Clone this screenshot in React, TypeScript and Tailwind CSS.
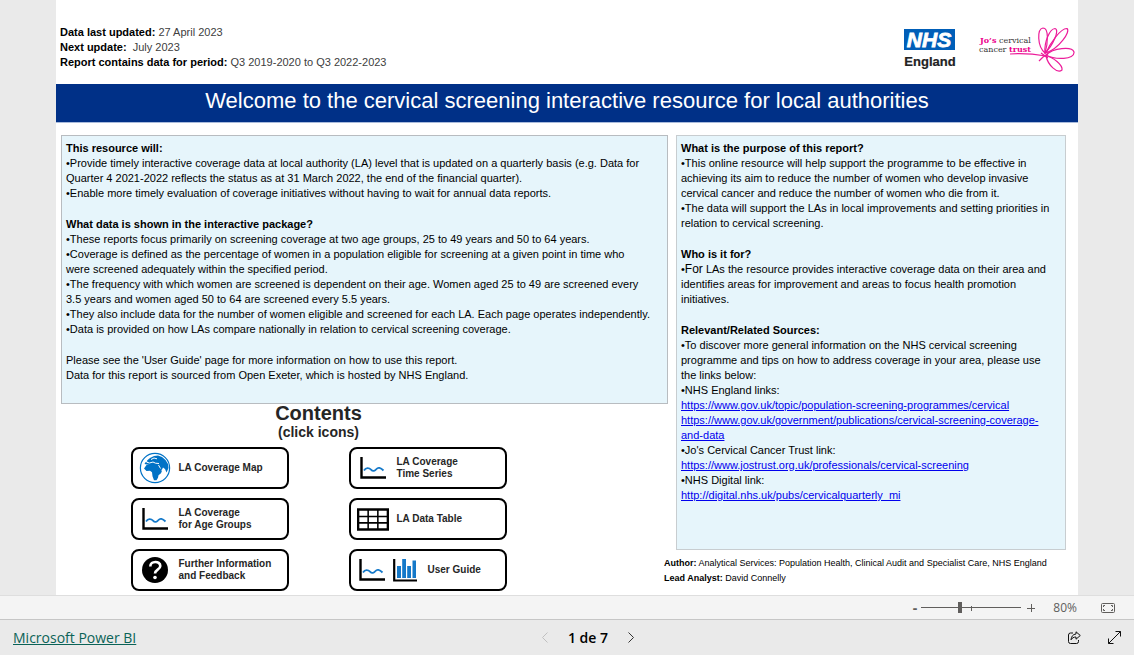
import { ReactNode, useState } from "react";

const ChartIcon = () => (
  <svg width="26" height="22" viewBox="0 0 26 22" fill="none">
    <path d="M1.5 0v20.5H26" stroke="#000" strokeWidth="2.4" />
    <path
      d="M4 13.5c2-3 5-3 7-.8s4 1.2 5.5-.7 4-1.5 7 1.5"
      stroke="#1579c9"
      strokeWidth="1.8"
    />
  </svg>
);

const BarsIcon = () => (
  <svg width="24" height="23" viewBox="0 0 24 23" fill="none">
    <path d="M1.2 0v21.5H24" stroke="#000" strokeWidth="2.2" />
    <path d="M4 7h4v12H4zM9.2 0H13v19H9.2zM14.2 7H18v12h-3.800zM19.500 1.500H23V19h-3.500z" fill="#1579c9" />
  </svg>
);

const TableIcon = () => (
  <svg width="33" height="23" viewBox="0 0 33 23" fill="none" stroke="#000">
    <path d="M1.2 1.2h30.6v20.6H1.2z" strokeWidth="2.4" />
    <path d="M1 8.5h31M1 15h31M11.5 1v21M21.5 1v21" strokeWidth="1.6" />
  </svg>
);

const QuestionIcon = () => (
  <svg width="26" height="26" viewBox="0 0 26 26" fill="none">
    <circle cx="13" cy="13" r="13" fill="#000" />
    <path
      d="M8.3 9.500c0-6 10-6 10-.5 0 3.800-5.300 3.500-5.300 7.500"
      stroke="#fff"
      strokeWidth="2.6"
    />
    <circle cx="13" cy="20.500" r="1.800" fill="#fff" />
  </svg>
);

const GlobeIcon = () => (
  <svg width="32" height="32" viewBox="0 0 32 32">
    <circle cx="16" cy="16" r="14.600" fill="#fff" stroke="#0072c6" strokeWidth="1.200" />
    <path
      d="M8 8.500l3-2.500 4-2 4-.5 4 1.500 3.500 3 2.500 4 .5 4-2 4.500-1.500-3.500-2-1.500-1 2-2 1.500-2.500-3.500-2-1.500-2.500-.5-3-1.500-3 .5-2.500-.5 1-1.800 2-.7z"
      fill="#0072c6"
    />
    <path
      d="M7.500 13l3-1.300 3 .3 2 1 3 .3 2 4 2.500 1.500-1 2.500-2.500 2-.5 2.500-1.500 2.500h-2.500l-1.500-4-.5-4-2-1.500-3.500.2-2.500-2.500z"
      fill="#0072c6"
    />
    <path d="M7.500 10.200l3 .8 3.500-1 2.500 1.200 3.500.3M12 7.500l3-1.500 3 .8M19.500 13l2 3.500" stroke="#fff" strokeWidth="1" fill="none" />
  </svg>
);

const JosTrustLogo = () => (
  <svg width="99" height="50" viewBox="0 0 99 50" role="img" aria-label="Jo's cervical cancer trust">
    <g fontFamily="'DejaVu Serif', serif" fontSize="8" fill="#333">
      <text x="4" y="19">
        <tspan fill="#ec008c" fontWeight="700">Jo’s</tspan> cervical
      </text>
      <text x="3" y="28">
        cancer <tspan fill="#ec008c" fontWeight="700">trust</tspan>
      </text>
    </g>
    <g fill="none" stroke="#ec1c9a" strokeWidth="1.200">
      <path d="M34 30c12-1 24 0 36 2" />
      <path d="M69 29C61 22 61 5 67 4c6 0 5 15 2 25z" />
      <path d="M69 29C68 17 74 5 79 4.500c5 1-2 17-10 24.500z" />
      <path d="M70 29C74 19 85 4 91 4.500c4 3-8 20-21 24.500z" />
      <path d="M70 31c7-7 26-9 28-3 1 8-19 8-28 3z" />
      <path d="M70 32c7 1 17 9 16 14-5 4-14-5-16-14z" />
      <path d="M63 37l4-4 5-3M65 29l7 5" />
    </g>
  </svg>
);

interface ContentsButtonProps {
  icon: ReactNode;
  iconWidth?: string;
  children: ReactNode;
}

const ContentsButton = ({ icon, iconWidth = "w-8", children }: ContentsButtonProps) => (
  <button className="flex items-center gap-2 h-[42px] w-[158px] pl-1.5 rounded-lg border-2 border-black bg-white text-left text-[10px] leading-3 font-bold text-neutral-800">
    <span className={`${iconWidth} flex-none flex items-center justify-center gap-2`}>{icon}</span>
    <span>{children}</span>
  </button>
);

const Link = ({ href, children }: { href: string; children: ReactNode }) => (
  <a href={href} className="text-[#0000ee] underline">
    {children}
  </a>
);

const App = () => {
  const [zoom, setZoom] = useState(39);

  return (
    <div className="min-h-screen flex flex-col bg-[#eaeaea] font-['Liberation_Sans',Arial,sans-serif] text-black">
      <main className="flex-1 mx-14 bg-white text-[11px] leading-[15px]">
        <header className="flex justify-between h-21 pl-1 pr-[3px]">
          <div className="pt-[25px] text-neutral-700">
            <p>
              <b className="text-black">Data last updated:</b> 27 April 2023
            </p>
            <p>
              <b className="text-black">Next update:</b>&nbsp; July 2023
            </p>
            <p>
              <b className="text-black">Report contains data for period:</b> Q3 2019-2020 to Q3 2022-2023
            </p>
          </div>
          <div className="flex gap-5 pt-6">
            <svg width="54" height="46" viewBox="0 0 54 46" role="img" aria-label="NHS England">
              <path d="M2 5h51v21H2z" fill="#005eb8" />
              <text x="27" y="23" textAnchor="middle" fontSize="21" fontWeight="700" fontStyle="italic" fill="#fff" stroke="#fff" strokeWidth="0.800">
                NHS
              </text>
              <text x="28" y="42" textAnchor="middle" fontSize="13" fontWeight="700" fill="#222" stroke="#222" strokeWidth="0.200">
                England
              </text>
            </svg>
            <JosTrustLogo />
          </div>
        </header>

        <h1 className="h-[39px] pt-1 bg-[#003087] border-b border-[#a9bbdc] text-center text-[22px] leading-[26px] text-white">
          Welcome to the cervical screening interactive resource for local authorities
        </h1>

        <div className="flex gap-2 pt-3 pl-[5px] pr-1.5">
          <div className="flex-[607] min-w-0">
            <section className="h-[269px] bg-[#e6f5fb] border border-[#b8bcc0] px-1 py-[5px]">
              <h2 className="font-bold">This resource will:</h2>
              <p>
                •Provide timely interactive coverage data at local authority (LA) level that is updated on a quarterly basis (e.g. Data for Quarter 4 2021-2022 reflects the status as at 31 March 2022, the end of the financial quarter).
              </p>
              <p>•Enable more timely evaluation of coverage initiatives without having to wait for annual data reports.</p>
              <h2 className="mt-4 font-bold">What data is shown in the interactive package?</h2>
              <p>•These reports focus primarily on screening coverage at two age groups, 25 to 49 years and 50 to 64 years.</p>
              <p>
                •Coverage is defined as the percentage of women in a population eligible for screening at a given point in time who
                <br />
                were screened adequately within the specified period.
              </p>
              <p>
                •The frequency with which women are screened is dependent on their age. Women aged 25 to 49 are screened every
                <br />
                3.5 years and women aged 50 to 64 are screened every 5.5 years.
              </p>
              <p>•They also include data for the number of women eligible and screened for each LA. Each page operates independently.</p>
              <p>•Data is provided on how LAs compare nationally in relation to cervical screening coverage.</p>
              <p className="mt-4">Please see the 'User Guide' page for more information on how to use this report.</p>
              <p>Data for this report is sourced from Open Exeter, which is hosted by NHS England.</p>
            </section>

            <nav className="flex flex-col items-center pr-[92px] text-neutral-800">
              <h2 className="text-xl leading-[18px] font-bold">Contents</h2>
              <p className="text-sm leading-5 font-bold">(click icons)</p>
              <div className="grid grid-cols-2 gap-x-15 gap-y-[9px] mt-[5px]">
                <ContentsButton icon={<GlobeIcon />}>LA Coverage Map</ContentsButton>
                <ContentsButton icon={<ChartIcon />}>
                  LA Coverage
                  <br />
                  Time Series
                </ContentsButton>
                <ContentsButton icon={<ChartIcon />}>
                  LA Coverage
                  <br />
                  for Age Groups
                </ContentsButton>
                <ContentsButton icon={<TableIcon />}>LA Data Table</ContentsButton>
                <ContentsButton icon={<QuestionIcon />}>
                  Further Information
                  <br />
                  and Feedback
                </ContentsButton>
                <ContentsButton
                  iconWidth="w-[63px]"
                  icon={
                    <>
                      <ChartIcon />
                      <BarsIcon />
                    </>
                  }
                >
                  User Guide
                </ContentsButton>
              </div>
            </nav>
          </div>

          <div className="flex-[396] min-w-0">
            <section className="h-[415px] mr-1.5 bg-[#e6f5fb] border border-[#c8cdd0] px-1 py-[5px]">
              <h2 className="font-bold">What is the purpose of this report?</h2>
              <p>
                •This online resource will help support the programme to be effective in achieving its aim to reduce the number of women who develop invasive cervical cancer and reduce the number of women who die from it.
              </p>
              <p>•The data will support the LAs in local improvements and setting priorities in relation to cervical screening.</p>
              <h2 className="mt-4 font-bold">Who is it for?</h2>
              <p>
                •<span className="text-xs leading-[15px]">For</span> LAs the resource provides interactive coverage data on their area and identifies areas for improvement and areas to focus health promotion initiatives.
              </p>
              <h2 className="mt-4 font-bold">Relevant/Related Sources:</h2>
              <p>
                •To discover more general information on the NHS cervical screening programme and tips on how to address coverage in your area, please use
                <br />
                the links below:
              </p>
              <p>•NHS England links:</p>
              <p>
                <Link href="https://www.gov.uk/topic/population-screening-programmes/cervical">
                  https://www.gov.uk/topic/population-screening-programmes/cervical
                </Link>
              </p>
              <p>
                <Link href="https://www.gov.uk/government/publications/cervical-screening-coverage-and-data">
                  https://www.gov.uk/government/publications/cervical-screening-coverage-
                  <br />
                  and-data
                </Link>
              </p>
              <p>•Jo's Cervical Cancer Trust link:</p>
              <p>
                <Link href="https://www.jostrust.org.uk/professionals/cervical-screening">
                  https://www.jostrust.org.uk/professionals/cervical-screening
                </Link>
              </p>
              <p>•NHS Digital link:</p>
              <p>
                <Link href="http://digital.nhs.uk/pubs/cervicalquarterly_mi">
                  http://digital.nhs.uk/pubs/cervicalquarterly_mi
                </Link>
              </p>
            </section>
            <div className="-ml-3 mt-1.5 text-[9px] leading-[15px] whitespace-nowrap">
              <p>
                <b>Author:</b> Analytical Services: Population Health, Clinical Audit and Specialist Care, NHS England
              </p>
              <p>
                <b>Lead Analyst:</b> David Connelly
              </p>
            </div>
          </div>
        </div>
      </main>

      <div className="flex items-center justify-end h-6 pr-[19px] bg-[#f4f4f4] border-t border-[#dedede] font-['Open_Sans',sans-serif] text-xs text-[#605e5c]">
        <button className="w-3 text-sm font-bold" aria-label="Zoom out" onClick={() => setZoom(zoom - 5)}>
          -
        </button>
        <div className="relative flex items-center">
          <input
            type="range"
            aria-label="Zoom"
            value={zoom}
            onChange={(e) => setZoom(Number(e.target.value))}
            className="w-[100px] h-3 appearance-none bg-transparent [&::-webkit-slider-runnable-track]:h-px [&::-webkit-slider-runnable-track]:bg-[#605e5c] [&::-webkit-slider-thumb]:appearance-none [&::-webkit-slider-thumb]:w-1 [&::-webkit-slider-thumb]:h-[11px] [&::-webkit-slider-thumb]:-mt-[5px] [&::-webkit-slider-thumb]:bg-[#605e5c]"
          />
          <span className="absolute left-[50px] top-1 w-px h-[5px] bg-[#605e5c]" />
        </div>
        <button className="w-5 flex justify-center" aria-label="Zoom in" onClick={() => setZoom(zoom + 5)}>
          <svg width="8" height="8" viewBox="0 0 8 8" stroke="#605e5c">
            <path d="M0 4.500h8M4.500 0v8" />
          </svg>
        </button>
        <span className="w-9 text-right">80%</span>
        <button className="ml-6" aria-label="Fit to page">
          <svg width="14" height="10" viewBox="0 0 14 10" fill="none" stroke="#605e5c">
            <rect x="0.500" y="0.500" width="13" height="9" rx="1" />
            <path d="M2.500 4V2.500H4M10 2.500h1.500V4M11.500 6v1.500H10M4 7.500H2.500V6" />
          </svg>
        </button>
      </div>

      <footer className="grid grid-cols-3 items-center h-9 px-[13px] border-t border-[#c6c6c6] font-['Open_Sans',sans-serif] text-sm">
        <div>
          <a href="https://powerbi.microsoft.com" className="text-[#0b6357] underline">
            Microsoft Power BI
          </a>
        </div>
        <div className="flex items-center justify-center gap-5 pl-[42px]">
          <button aria-label="Previous page">
            <svg width="6" height="11" viewBox="0 0 6 11" fill="none" stroke="#c0c0c0">
              <path d="M5.500.5l-5 5 5 5" />
            </svg>
          </button>
          <span className="font-semibold">1 de 7</span>
          <button aria-label="Next page">
            <svg width="6" height="11" viewBox="0 0 6 11" fill="none" stroke="#333">
              <path d="M.5.5l5 5-5 5" />
            </svg>
          </button>
        </div>
        <div className="flex items-center justify-end gap-[27px]">
          <button aria-label="Share">
            <svg width="13" height="13" viewBox="0 0 13 13" fill="none" stroke="#111">
              <path d="M5 2H2.500Q.5 2 .5 4v6.500q0 2 2 2h6q2 0 2-2V9" />
              <path d="M8 .8L12.300 4.500 8 8.200V6C5.500 6 4.200 7 3 8.800 3.300 5.500 5 3.200 8 3z" />
            </svg>
          </button>
          <button aria-label="Full screen">
            <svg width="13" height="13" viewBox="0 0 13 13" fill="none" stroke="#111">
              <path d="M.5 12.500l12-12M7.500.5h5v5M.5 7.500v5h5" />
            </svg>
          </button>
        </div>
      </footer>
    </div>
  );
};

export default App;
